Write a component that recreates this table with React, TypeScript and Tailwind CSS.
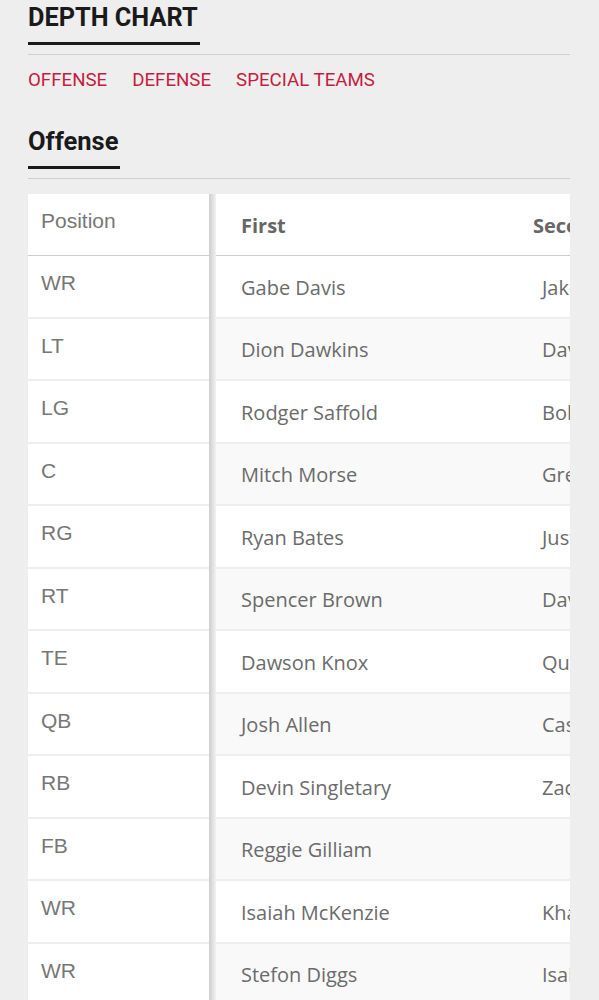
import React from "react";

const rows: [string, string, string][] = [
  ["WR", "Gabe Davis", "Jake Kumerow"],
  ["LT", "Dion Dawkins", "David Quessenberry"],
  ["LG", "Rodger Saffold", "Bobby Hart"],
  ["C", "Mitch Morse", "Greg Mancz"],
  ["RG", "Ryan Bates", "Justin Murray"],
  ["RT", "Spencer Brown", "David Edwards"],
  ["TE", "Dawson Knox", "Quintin Morris"],
  ["QB", "Josh Allen", "Case Keenum"],
  ["RB", "Devin Singletary", "Zack Moss"],
  ["FB", "Reggie Gilliam", ""],
  ["WR", "Isaiah McKenzie", "Khalil Shakir"],
  ["WR", "Stefon Diggs", "Isaiah Hodgins"],
  ["TE", "Tommy Sweeney", "Zach Davidson"],
];

export default function App() {
  return (
    <div className="min-h-[1000px] bg-[#eeeeee] px-[28px] pr-[29px] font-['Roboto',sans-serif]">
      <div className="pt-[3px]">
        <div className="inline-block">
          <h1 className="text-[25.3px] leading-[30px] font-bold text-[#1a1a1a]">DEPTH CHART</h1>
          <div className="mt-[9px] h-[3px] w-[172px] bg-[#1a1a1a]" />
        </div>
        <div className="mt-[9px] h-px bg-[#cfcfcf]" />
      </div>
      <div className="mt-[13px] flex gap-[25px] text-[18.7px] leading-[24px] text-[#c41d3f] font-normal">
        <span>OFFENSE</span>
        <span>DEFENSE</span>
        <span>SPECIAL TEAMS</span>
      </div>
      <div className="mt-[34px]">
        <div className="inline-block">
          <h2 className="text-[25.5px] leading-[30px] font-bold text-[#1a1a1a]">Offense</h2>
          <div className="mt-[10px] h-[3px] w-[92px] bg-[#1a1a1a]" />
        </div>
        <div className="mt-[9px] h-px bg-[#cfcfcf]" />
      </div>
      <div className="mt-[15px] flex">
        <div className="w-[181px] shrink-0 bg-white font-['Liberation_Sans',sans-serif] text-[21px] text-[#777777]">
          <div className="h-[62px] border-b border-[#cccccc] pl-[13px] pt-[14px] leading-[26px]">Position</div>
          {rows.map((r, i) => (
            <div key={i} className="h-[62.5px] border-b-2 border-[#eeeeee] pl-[13px] pt-[14px] leading-[26px]">
              {r[0]}
            </div>
          ))}
        </div>
        <div className="w-[7px] shrink-0 bg-gradient-to-r from-[#cdcdcd] to-[#f2f2f2]" />
        <div className="flex-1 overflow-hidden bg-white font-['Open_Sans',sans-serif] text-[20px] text-[#6b6b6b]">
          <div className="w-[700px]">
            <div className="flex h-[62px] items-center border-b border-[#cccccc] pt-[2px] font-bold text-[#666666]">
              <div className="w-[317px] shrink-0 pl-[25px]">First</div>
              <div>Second</div>
              <div className="ml-[60px]">Third</div>
            </div>
            {rows.map((r, i) => (
              <div
                key={i}
                className={`flex h-[62.5px] items-center border-b-2 border-[#eeeeee] pt-[3px] ${i % 2 === 1 ? "bg-[#f9f9f9]" : "bg-white"}`}
              >
                <div className="w-[326px] shrink-0 pl-[25px]">{r[1]}</div>
                <div>{r[2]}</div>
              </div>
            ))}
          </div>
        </div>
      </div>
    </div>
  );
}
